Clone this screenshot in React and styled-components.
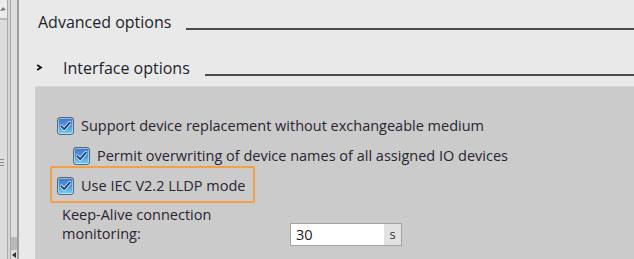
import React from "react";
import styled, { createGlobalStyle } from "styled-components";

const GlobalStyle = createGlobalStyle`
  html, body {
    margin: 0;
    padding: 0;
    background: #e9e9e9;
    overflow: hidden;
  }
  body {
    font-family: "Open Sans", "Noto Sans", sans-serif;
    color: #2a2430;
  }
`;

const options = [
  { label: "Support device replacement without exchangeable medium", indent: 0 },
  { label: "Permit overwriting of device names of all assigned IO devices", indent: 16 },
  { label: "Use IEC V2.2 LLDP mode", indent: 0, highlight: true },
];

export default function App() {
  return (
    <>
      <GlobalStyle />
      <Page>
        <Rail>
          <RailTrack>
            <RailCap>
              <svg width="7" height="8" viewBox="0 0 7 8">
                <path d="M0 7 L3 3 L6 6 Z" fill="#7a7a7a" />
              </svg>
            </RailCap>
            <Grip>
              <svg width="4" height="8" viewBox="0 0 4 8">
                <rect x="0" y="1" width="4" height="1" fill="#8a8a8a" />
                <rect x="0" y="4" width="4" height="1" fill="#8a8a8a" />
                <rect x="0" y="7" width="4" height="1" fill="#8a8a8a" />
              </svg>
            </Grip>
          </RailTrack>
          <RailGroove />
          <RailBar>
            <RailThumb />
            <svg width="6" height="6" viewBox="0 0 6 6">
              <path d="M1 3 L5 0 L5 6 Z" fill="#333" />
            </svg>
          </RailBar>
        </Rail>
        <Main>
          <SectionHead>
            <SectionTitle>Advanced options</SectionTitle>
            <Rule />
          </SectionHead>
          <SubHead>
            <Chevron>
              <svg width="7" height="7" viewBox="0 0 7 7">
                <path d="M1.2 1 L5 3.5 L1.2 6" fill="none" stroke="#111" strokeWidth="1.8" strokeLinejoin="miter" />
              </svg>
            </Chevron>
            <SubTitle>Interface options</SubTitle>
            <Rule />
          </SubHead>
          <Panel>
            <OptionList>
              {options.map((opt) => (
                <OptionRow key={opt.label} $indent={opt.indent} $highlight={opt.highlight}>
                  <CheckBox>
                    <svg width="11" height="10" viewBox="0 0 11 10">
                      <path d="M1.2 5.2 L4.2 8.2 L9.8 1.6" fill="none" stroke="#ffffff" strokeWidth="3.2" strokeLinecap="round" strokeLinejoin="round" />
                      <path d="M1.2 5.2 L4.2 8.2 L9.8 1.6" fill="none" stroke="#173a8a" strokeWidth="1.9" strokeLinecap="round" strokeLinejoin="round" />
                    </svg>
                  </CheckBox>
                  <OptionText>{opt.label}</OptionText>
                </OptionRow>
              ))}
            </OptionList>
            <Field>
              <FieldLabel>
                <span>Keep-Alive connection<br />monitoring:</span>
              </FieldLabel>
              <InputBox>
                <InputValue>30</InputValue>
                <InputUnit>s</InputUnit>
              </InputBox>
            </Field>
          </Panel>
        </Main>
      </Page>
    </>
  );
}

const Page = styled.div`
  display: flex;
  width: 634px;
  height: 259px;
  overflow: hidden;
`;

const Rail = styled.div`
  display: flex;
  width: 19px;
  flex-shrink: 0;
  height: 100%;
`;

const RailTrack = styled.div`
  width: 7px;
  display: flex;
  flex-direction: column;
  background: #dcdcdc;
  border-right: 1px solid #a9a9a9;
`;

const RailCap = styled.div`
  height: 20px;
  background: #ececec;
  border-bottom: 2px solid #b9b9b9;
  display: flex;
  align-items: flex-start;
  padding-top: 4px;
  box-sizing: border-box;
`;

const Grip = styled.div`
  margin-top: 138px;
  display: flex;
`;

const RailGroove = styled.div`
  width: 3px;
  background: #d6d6d6;
  border-right: 1px solid #a8a8a8;
`;

const RailBar = styled.div`
  width: 6px;
  background: #dedede;
  border-right: 2px solid #9f9f9f;
  display: flex;
  flex-direction: column;
  justify-content: flex-end;
  align-items: center;
  padding-bottom: 1px;
`;

const RailThumb = styled.div`
  width: 100%;
  height: 13px;
  background: #b8b8b8;
  margin-bottom: 2px;
`;

const Main = styled.div`
  flex: 1;
  display: flex;
  flex-direction: column;
  min-width: 0;
`;

const SectionHead = styled.div`
  display: flex;
  align-items: flex-end;
  height: 31px;
  padding-left: 19px;
`;

const SectionTitle = styled.span`
  font-size: 16px;
  line-height: 20px;
  color: #1e1e2a;
  white-space: nowrap;
  margin-bottom: -1px;
`;

const Rule = styled.div`
  flex: 1;
  height: 2px;
  background: #4a4a4a;
  margin-left: 15px;
  margin-bottom: 1px;
`;

const SubHead = styled.div`
  display: flex;
  align-items: flex-end;
  height: 46px;
  padding-left: 17px;
`;

const Chevron = styled.span`
  width: 27px;
  height: 20px;
  display: flex;
  align-items: center;
  padding-top: 1px;
  box-sizing: border-box;
`;

const SubTitle = styled.span`
  font-size: 16px;
  line-height: 20px;
  color: #1e1e2a;
  white-space: nowrap;
  margin-bottom: -1px;
`;

const Panel = styled.div`
  flex: 1;
  margin: 9px 0 0 16px;
  background: #cbcbcb;
  border-top: 1px solid #d8d8d8;
  padding: 30px 0 0 22px;
  display: flex;
  flex-direction: column;
`;

const OptionList = styled.div`
  display: flex;
  flex-direction: column;
  gap: 12px;
`;

const OptionRow = styled.div`
  display: flex;
  align-items: center;
  gap: 7px;
  height: 18px;
  margin-left: ${(p) => p.$indent}px;
  position: relative;
  align-self: flex-start;

  ${(p) =>
    p.$highlight &&
    `
    &::before {
      content: "";
      position: absolute;
      left: -7px;
      right: -9px;
      top: -11px;
      bottom: -8px;
      border: 2px solid #f5a043;
      border-radius: 2px;
      pointer-events: none;
    }
  `}
`;

const CheckBox = styled.span`
  width: 15px;
  height: 16px;
  border: 1px solid #5f6673;
  border-radius: 3px;
  background: linear-gradient(180deg, #3f78cc 0%, #4c9ddd 55%, #74d2f2 100%);
  box-shadow: inset 0 0 0 1px rgba(255, 255, 255, 0.45);
  display: flex;
  align-items: center;
  justify-content: center;
  flex-shrink: 0;
`;

const OptionText = styled.span`
  font-size: 14.5px;
  line-height: 18px;
  color: #2a2430;
  white-space: nowrap;
`;

const Field = styled.div`
  display: flex;
  align-items: flex-end;
  margin: 10px 0 0 5px;
`;

const FieldLabel = styled.div`
  width: 228px;
  font-size: 14.5px;
  line-height: 19px;
  color: #2a2430;
  padding-bottom: 3px;
`;

const InputBox = styled.div`
  display: flex;
  width: 110px;
  height: 21px;
  border: 1px solid #a3a3a3;
  background: #ffffff;
`;

const InputValue = styled.span`
  flex: 1;
  font-size: 14.5px;
  line-height: 21px;
  padding-left: 5px;
  color: #1a1a1a;
`;

const InputUnit = styled.span`
  width: 17px;
  background: #e2e2e2;
  font-size: 13px;
  line-height: 21px;
  text-align: center;
  color: #333;
`;
